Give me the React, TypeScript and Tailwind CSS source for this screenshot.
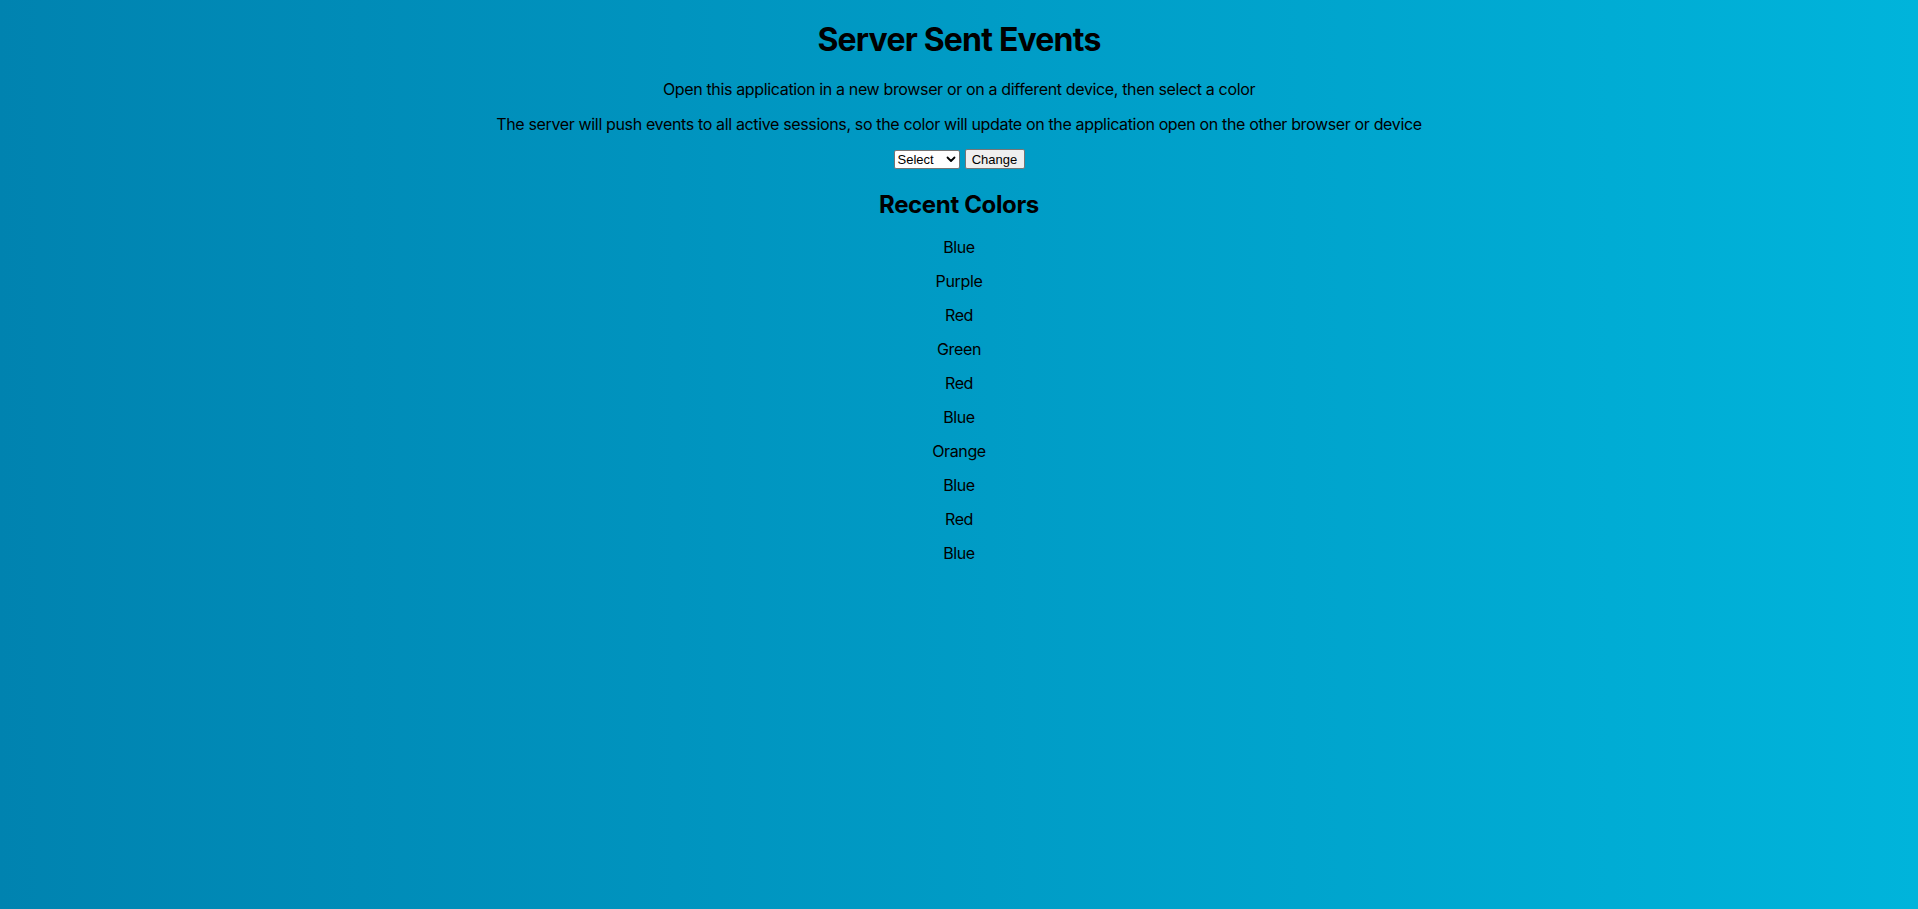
const recentColors = ["Blue", "Purple", "Red", "Green", "Red", "Blue", "Orange", "Blue", "Red", "Blue"];

function ColorSelect() {
  return (
    <div className="flex h-[19px] w-[66px] items-center justify-between border border-[#767676] bg-white pl-[3px] pr-[3px] rounded-[2px]">
      <span className="text-[13px] leading-none text-black tracking-normal font-['Liberation_Sans',Arial,sans-serif]">Select</span>
      <svg width="10" height="7" viewBox="0 0 10 7" fill="none" stroke="#000" strokeWidth="1.8" strokeLinecap="round" strokeLinejoin="round">
        <path d="M1.5 1.5 L5 5 L8.5 1.5" />
      </svg>
    </div>
  );
}

export default function App() {
  return (
    <div className="min-h-[909px] bg-gradient-to-r from-[#0083B0] to-[#00B4DB] text-black font-['Inter','Noto_Sans',sans-serif] tracking-[-0.022em] text-center pt-[21px]">
      <h1 className="text-[32px] font-bold leading-[38px] tracking-[-0.025em]">Server Sent Events</h1>
      <p className="mt-[21px] text-base leading-[19px]">
        Open this application in a new browser or on a different device, then select a color
      </p>
      <p className="mt-4 text-base leading-[19px]">
        The server will push events to all active sessions, so the color will update on the application open on the other browser or device
      </p>
      <div className="mt-[15px] flex items-center justify-center gap-[5px]">
        <ColorSelect />
        <button className="h-[20px] w-[60px] border border-[#767676] bg-[#efefef] rounded-[2px] text-[13px] leading-none text-black tracking-normal font-['Liberation_Sans',Arial,sans-serif]">
          Change
        </button>
      </div>
      <h2 className="mt-[21px] text-2xl font-bold leading-[29px]">Recent Colors</h2>
      <div className="mt-[19px] flex flex-col gap-4">
        {recentColors.map((c, i) => (
          <p key={i} className="text-base leading-[18px]">
            {c}
          </p>
        ))}
      </div>
    </div>
  );
}
